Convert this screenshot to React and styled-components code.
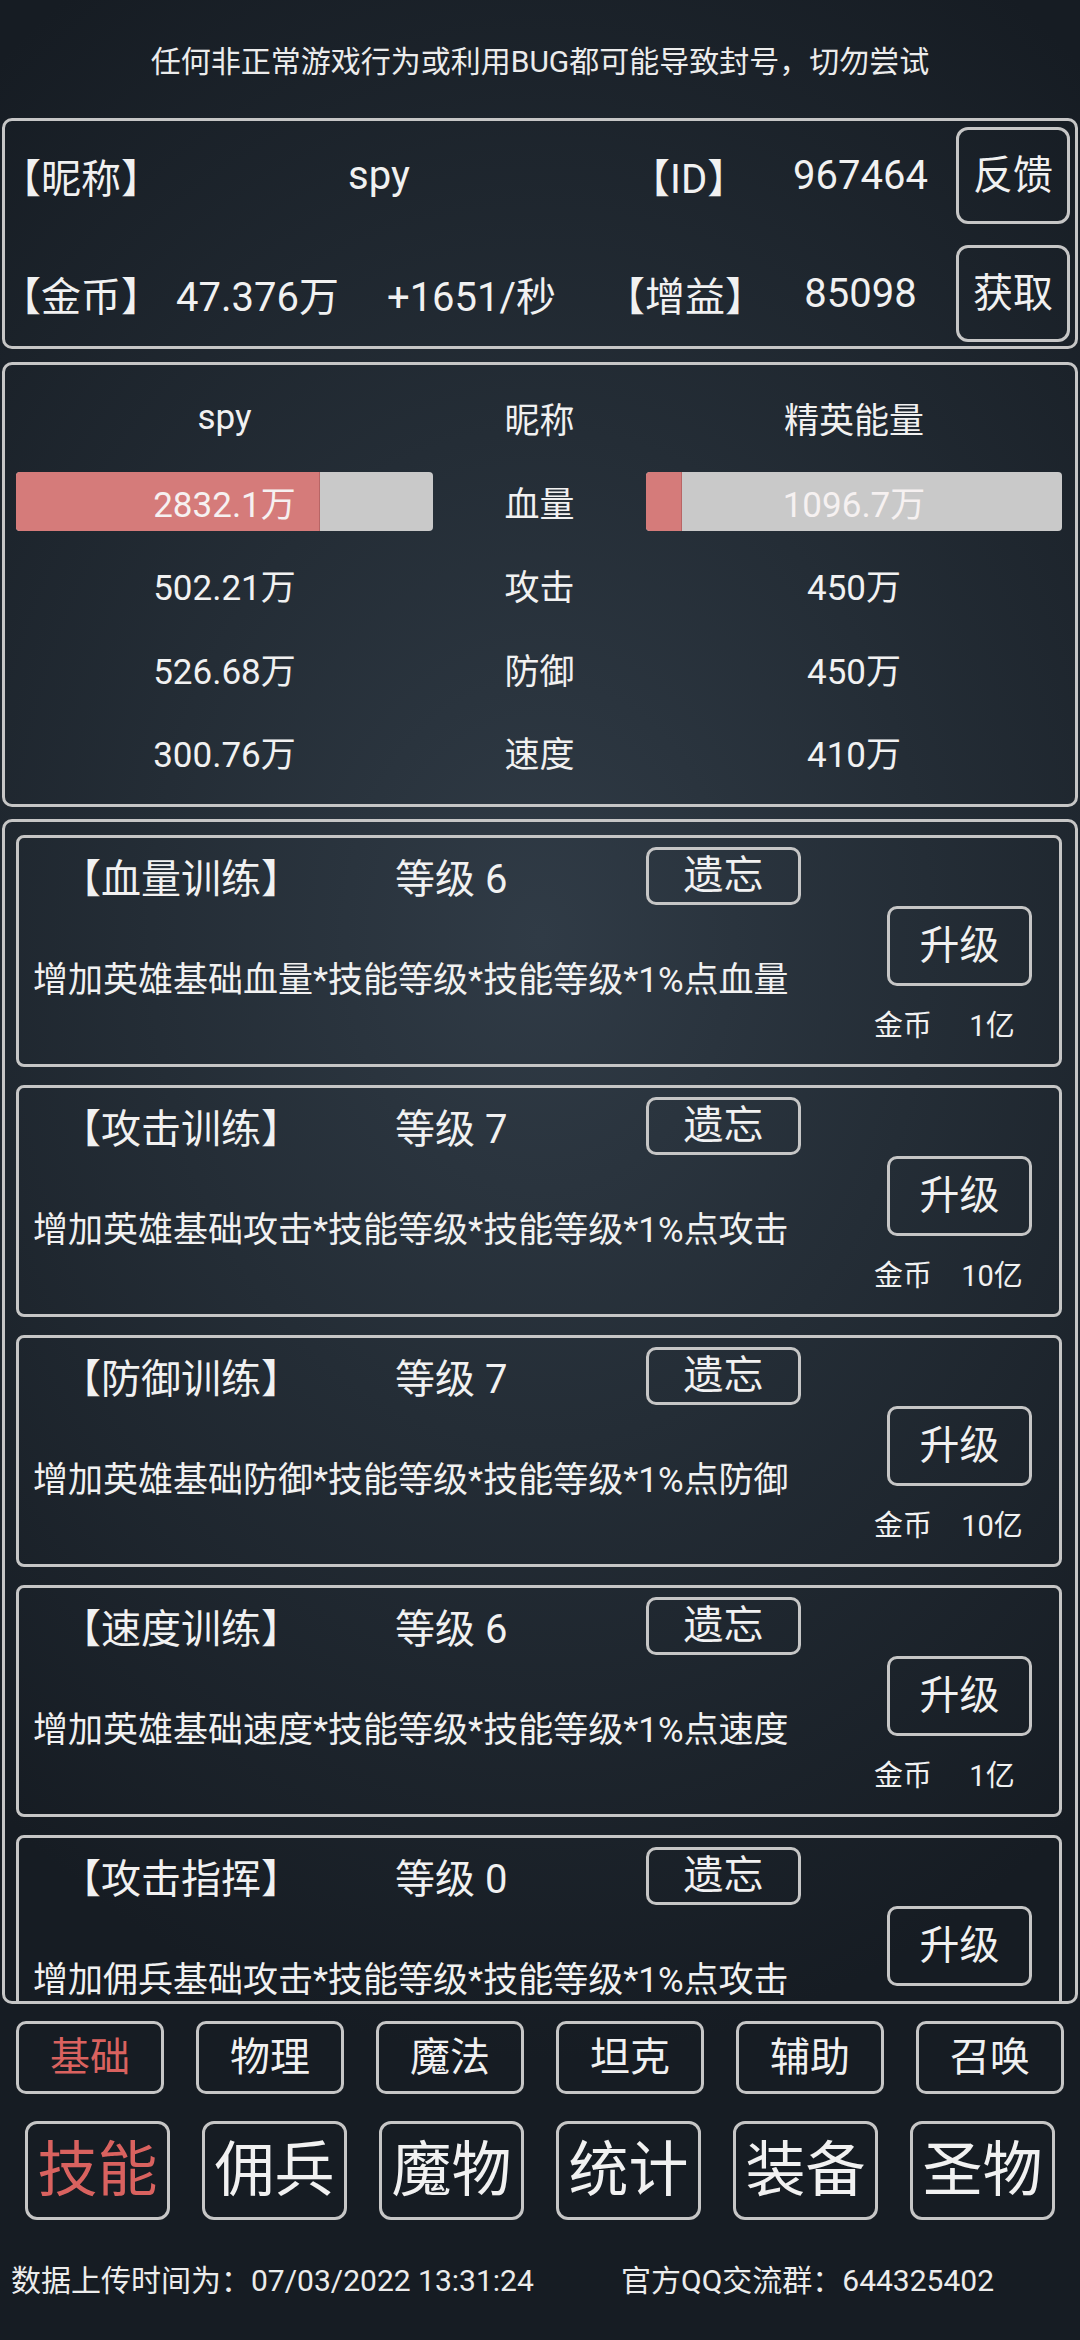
import React from "react";
import styled, { createGlobalStyle } from "styled-components";

const Global = createGlobalStyle`
  html, body { margin: 0; padding: 0; }
  body {
    width: 1080px;
    height: 2340px;
    overflow: hidden;
    background: radial-gradient(ellipse 80% 48% at 50% 40%, #303b46 0%, #242d36 45%, #161c23 100%);
    font-family: Roboto, "Noto Sans CJK SC", sans-serif;
    color: #f1f1f1;
  }
  #root { width: 1080px; height: 2340px; }
  * { box-sizing: border-box; }
`;

const BORDER = "#c6c6c6";

const Screen = styled.div`
  width: 1080px;
  height: 2340px;
  display: flex;
  flex-direction: column;
`;

const Notice = styled.div`
  height: 118px;
  display: flex;
  align-items: center;
  justify-content: center;
  font-size: 30px;
  color: #ececec;
`;

const Panel = styled.section`
  margin: 0 2px;
  border: 3px solid ${BORDER};
  border-radius: 10px;
`;

const InfoPanel = styled(Panel)`
  height: 231px;
  padding: 6px 5px 4px 0;
  display: grid;
  grid-template-rows: 97px 97px;
  row-gap: 21px;
`;

const InfoRow = styled.div`
  display: grid;
  grid-template-columns: 160px 185px 243px 172px 191px 114px;
  align-items: center;
  font-size: 40px;
`;

const Label = styled.div`
  white-space: nowrap;
  padding-left: ${(p) => p.$indent || 0}px;
  margin-left: ${(p) => p.$shift || 0}px;
`;

const Value = styled.div`
  text-align: center;
  white-space: nowrap;
  grid-column: span ${(p) => p.$span || 1};
`;

const FrameButton = styled.button`
  width: ${(p) => p.$w}px;
  height: ${(p) => p.$h}px;
  border: 3px solid ${BORDER};
  border-radius: ${(p) => p.$r || 10}px;
  background: transparent;
  color: ${(p) => (p.$active ? "#d9625f" : "#f1f1f1")};
  font-family: inherit;
  font-size: ${(p) => p.$fs}px;
  padding: 0;
  margin-left: ${(p) => p.$ml || 0}px;
  display: flex;
  align-items: center;
  justify-content: center;
  line-height: 1.2;
  flex-shrink: 0;
`;

const StatsPanel = styled(Panel)`
  margin-top: 13px;
  height: 445px;
  padding: 11px 13px 0 11px;
  display: grid;
  grid-template-columns: 417px 213px 416px;
  grid-auto-rows: 83.5px;
  align-items: center;
  text-align: center;
  font-size: 35px;
`;

const Bar = styled.div`
  position: relative;
  height: 59px;
  border-radius: 4px;
  background: #c9c9c9;
  overflow: hidden;
  display: flex;
  align-items: center;
  justify-content: center;
`;

const BarFill = styled.div`
  position: absolute;
  left: 0;
  top: 0;
  bottom: 0;
  background: #d57b7a;
  border-right: 1px solid #b86565;
`;

const BarText = styled.span`
  position: relative;
  color: #f6f1f1;
`;

const SkillPanel = styled(Panel)`
  margin-top: 12px;
  height: 1185px;
  padding: 13px 13px 0 11px;
  overflow: hidden;
  display: flex;
  flex-direction: column;
  gap: 18px;
`;

const Card = styled.div`
  height: 232px;
  flex-shrink: 0;
  border: 3px solid ${BORDER};
  border-radius: 8px;
`;

const CardTop = styled.div`
  margin-top: 9px;
  height: 58px;
  display: flex;
  align-items: center;
  font-size: 40px;
`;

const SkillTitle = styled.div`
  width: 376px;
  padding-left: 42px;
  white-space: nowrap;
`;

const SkillLevel = styled.div`
  width: 251px;
  white-space: nowrap;
`;

const CardBottom = styled.div`
  margin-top: 1px;
  display: flex;
  justify-content: space-between;
  padding-left: 14px;
`;

const Desc = styled.div`
  margin-top: 52px;
  font-size: 35px;
  line-height: 46px;
  white-space: nowrap;
`;

const RightCol = styled.div`
  width: 185px;
  display: grid;
  justify-items: start;
`;

const Cost = styled.div`
  margin-top: 16px;
  height: 42px;
  display: grid;
  grid-template-columns: 58px 120px;
  align-items: center;
  font-size: 29px;
  white-space: nowrap;
`;

const CostAmount = styled.span`
  text-align: center;
`;

const TabRow = styled.div`
  margin-top: ${(p) => p.$top}px;
  height: ${(p) => p.$h}px;
  padding: 0 ${(p) => p.$pad}px;
  display: flex;
  justify-content: space-between;
`;

const Footer = styled.div`
  margin-top: 41px;
  height: 40px;
  line-height: 40px;
  padding-left: 11px;
  display: flex;
  font-size: 30px;
  color: #ececec;
  white-space: nowrap;
`;

const FooterLeft = styled.span`
  width: 610px;
`;

const skills = [
  { name: "【血量训练】", level: 6, desc: "增加英雄基础血量*技能等级*技能等级*1%点血量", cost: "1亿" },
  { name: "【攻击训练】", level: 7, desc: "增加英雄基础攻击*技能等级*技能等级*1%点攻击", cost: "10亿" },
  { name: "【防御训练】", level: 7, desc: "增加英雄基础防御*技能等级*技能等级*1%点防御", cost: "10亿" },
  { name: "【速度训练】", level: 6, desc: "增加英雄基础速度*技能等级*技能等级*1%点速度", cost: "1亿" },
  { name: "【攻击指挥】", level: 0, desc: "增加佣兵基础攻击*技能等级*技能等级*1%点攻击", cost: null },
];

const stats = [
  ["502.21万", "攻击", "450万"],
  ["526.68万", "防御", "450万"],
  ["300.76万", "速度", "410万"],
];

const subTabs = ["基础", "物理", "魔法", "坦克", "辅助", "召唤"];
const mainTabs = ["技能", "佣兵", "魔物", "统计", "装备", "圣物"];

export default function App() {
  const heroHp = 2832.1;
  const heroMax = 3880;
  const eliteHp = 1096.7;
  const eliteMax = 12600;
  return (
    <>
      <Global />
      <Screen>
        <Notice>任何非正常游戏行为或利用BUG都可能导致封号，切勿尝试</Notice>

        <InfoPanel>
          <InfoRow>
            <Label $shift={-4}>【昵称】</Label>
            <Value $span={2}>spy</Value>
            <Label $indent={37}>【ID】</Label>
            <Value>967464</Value>
            <FrameButton $w={114} $h={97} $fs={40} $r={12}>反馈</FrameButton>
          </InfoRow>
          <InfoRow>
            <Label $shift={-4}>【金币】</Label>
            <Value>47.376万</Value>
            <Value>+1651/秒</Value>
            <Label $indent={12}>【增益】</Label>
            <Value>85098</Value>
            <FrameButton $w={114} $h={97} $fs={40} $r={12}>获取</FrameButton>
          </InfoRow>
        </InfoPanel>

        <StatsPanel>
          <div>spy</div>
          <div>昵称</div>
          <div>精英能量</div>
          <Bar>
            <BarFill style={{ width: `${(heroHp / heroMax) * 100}%` }} />
            <BarText>2832.1万</BarText>
          </Bar>
          <div>血量</div>
          <Bar>
            <BarFill style={{ width: `${(eliteHp / eliteMax) * 100}%` }} />
            <BarText>1096.7万</BarText>
          </Bar>
          {stats.map(([a, b, c]) => (
            <React.Fragment key={b}>
              <div>{a}</div>
              <div>{b}</div>
              <div>{c}</div>
            </React.Fragment>
          ))}
        </StatsPanel>

        <SkillPanel>
          {skills.map((s) => (
            <Card key={s.name}>
              <CardTop>
                <SkillTitle>{s.name}</SkillTitle>
                <SkillLevel>等级 {s.level}</SkillLevel>
                <FrameButton $w={155} $h={58} $fs={40}>遗忘</FrameButton>
              </CardTop>
              <CardBottom>
                <Desc>{s.desc}</Desc>
                <RightCol>
                  <FrameButton $w={145} $h={80} $fs={40} $ml={13}>升级</FrameButton>
                  {s.cost && (
                    <Cost>
                      <span>金币</span>
                      <CostAmount>{s.cost}</CostAmount>
                    </Cost>
                  )}
                </RightCol>
              </CardBottom>
            </Card>
          ))}
        </SkillPanel>

        <TabRow $top={17} $h={73} $pad={16}>
          {subTabs.map((t, i) => (
            <FrameButton key={t} $w={148} $h={73} $fs={40} $active={i === 0}>{t}</FrameButton>
          ))}
        </TabRow>

        <TabRow $top={27} $h={99} $pad={25}>
          {mainTabs.map((t, i) => (
            <FrameButton key={t} $w={145} $h={99} $fs={60} $r={12} $active={i === 0}>{t}</FrameButton>
          ))}
        </TabRow>

        <Footer>
          <FooterLeft>数据上传时间为：07/03/2022 13:31:24</FooterLeft>
          <span>官方QQ交流群：644325402</span>
        </Footer>
      </Screen>
    </>
  );
}
